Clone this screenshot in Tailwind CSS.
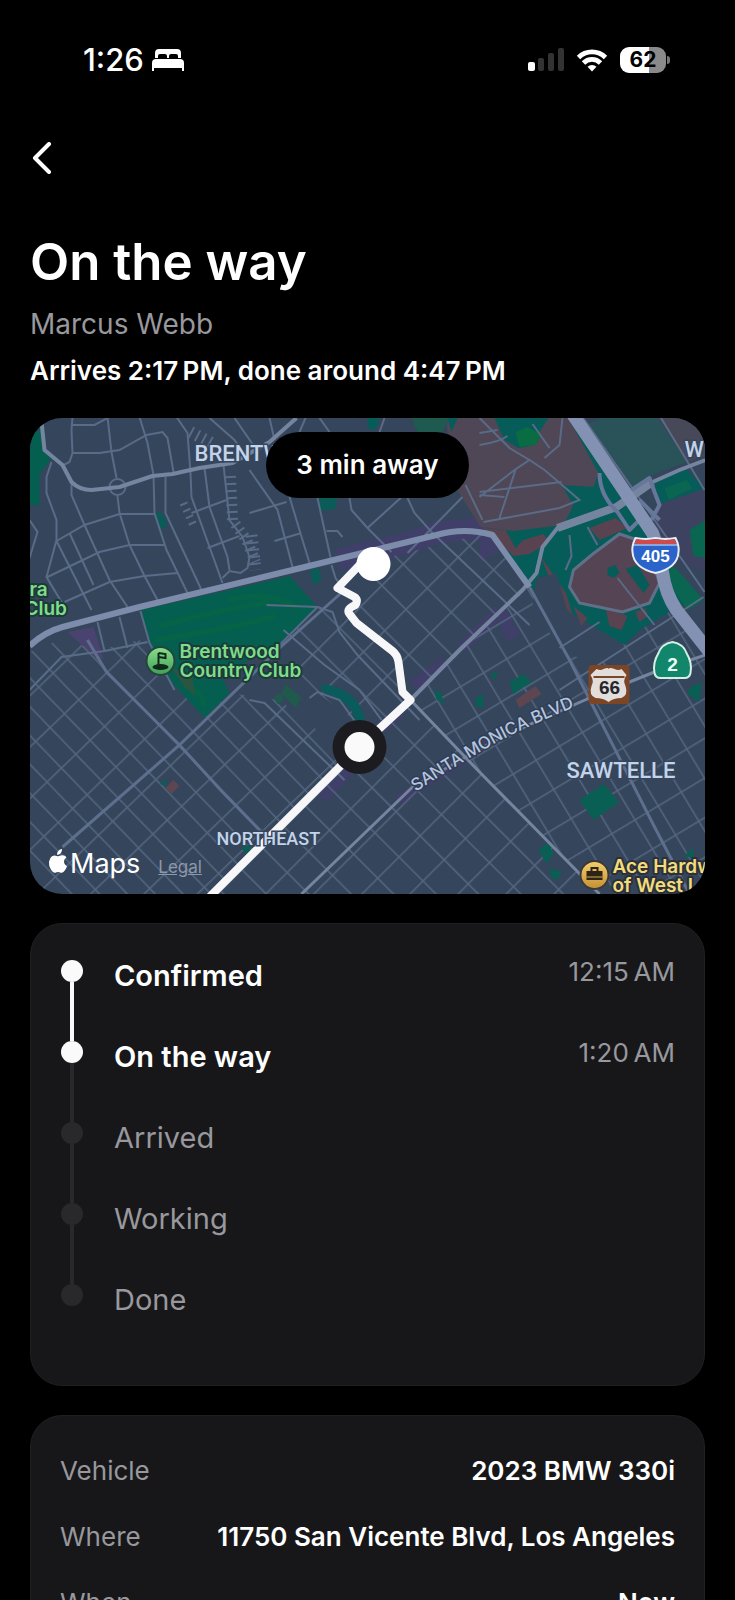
<!DOCTYPE html>
<html lang="en">
<head>
    <meta charset="UTF-8">
    <meta name="viewport" content="width=device-width, initial-scale=1.0">
    <title>On the way</title>
    <script src="https://cdn.jsdelivr.net/npm/@tailwindcss/browser@4"></script>
</head>
<body class="h-screen overflow-hidden bg-black text-white font-['Inter','Liberation_Sans',sans-serif]">

    <!-- status bar -->
    <header class="flex items-center justify-between pt-11 pl-[83px] pr-[65px]">
        <div class="flex items-center gap-2">
            <span class="text-[31px] leading-8 font-medium">1:26</span>
            <svg class="w-8 h-6" viewBox="0 0 32 24" fill="#fff">
                <path d="M3 10V5q0-4 4-4h18q4 0 4 4v5h-3V8q0-2-2-2h-5q-2 0-2 2v2h-2V8q0-2-2-2H8Q6 6 6 8v2z"/>
                <path d="M0 23v-8q0-4 4-4h24q4 0 4 4v8h-2v-3H2v3z"/>
            </svg>
        </div>
        <div class="flex items-center gap-3">
            <svg class="w-9 h-6" viewBox="0 0 36 24">
                <rect x="0" y="14" width="7" height="9" rx="2" fill="#fff"/>
                <rect x="10" y="10" width="6" height="13" rx="2" fill="#333"/>
                <rect x="20" y="5" width="6" height="18" rx="2" fill="#333"/>
                <rect x="30" y="0" width="6" height="23" rx="2" fill="#333"/>
            </svg>
            <svg class="w-8 h-6" viewBox="0 0 32 24" fill="none" stroke="#fff" stroke-width="4.800">
                <path d="M2.500 9.500a19 19 0 0 1 27 0"/>
                <path d="M7.500 15a12 12 0 0 1 17 0"/>
                <path d="M16 23.500l-4.500-4.800a6.500 6.500 0 0 1 9 0z" fill="#fff" stroke="none"/>
            </svg>
            <div class="flex items-center gap-px">
                <div class="w-[46px] h-[26px] rounded-[9px] bg-linear-to-r from-white from-63% to-[#8a8a8a] to-63% text-center text-[21px] leading-[26px] font-bold text-black">62</div>
                <div class="w-[3px] h-2 rounded-r-full bg-[#777]"></div>
            </div>
        </div>
    </header>

    <main class="px-[30px]">
        <button type="button" aria-label="Back" class="block mt-[66px] h-8">
            <svg class="w-6 h-8" viewBox="0 0 24 32" fill="none" stroke="#fff" stroke-width="4" stroke-linecap="round" stroke-linejoin="round">
                <path d="M19 2L5 16l14 14"/>
            </svg>
        </button>

        <h1 class="mt-[60px] text-[51px] leading-[56px] font-semibold">On the way</h1>
        <p class="mt-4 text-[28px] leading-9 text-[#98989d]">Marcus Webb</p>
        <p class="mt-[11px] text-[26px] leading-9 font-semibold">Arrives 2:17&#8239;PM, done around 4:47&#8239;PM</p>

        <!-- map -->
        <section class="relative mt-[29px] h-[476px] rounded-[32px] overflow-hidden bg-[#35465c]">
            <svg class="w-full h-full" viewBox="30 418 676 476" preserveAspectRatio="xMidYMid slice">
                <defs>
                    <pattern id="gridWest" width="20" height="37" patternUnits="userSpaceOnUse" patternTransform="translate(107 672) rotate(-44)">
                        <path d="M0 0V37M0 0H20" stroke="#54667f" stroke-width="3"/>
                    </pattern>
                    <pattern id="gridMid" width="30" height="34" patternUnits="userSpaceOnUse" patternTransform="translate(411 700) rotate(-45)">
                        <path d="M0 0V34M0 0H30" stroke="#54667f" stroke-width="3"/>
                    </pattern>
                    <pattern id="gridEast" width="27" height="34" patternUnits="userSpaceOnUse" patternTransform="translate(570 660) rotate(-31)">
                        <path d="M0 0V34M0 0H27" stroke="#54667f" stroke-width="3"/>
                    </pattern>
                    <path id="smPath" d="M416 792Q470 757 500 741T600 697"/>
                    <linearGradient id="golf" x2="0" y2="1">
                        <stop stop-color="#8be08c"/><stop offset="1" stop-color="#3f9d57"/>
                    </linearGradient>
                    <linearGradient id="shop" x2="0" y2="1">
                        <stop stop-color="#f4d06b"/><stop offset="1" stop-color="#c48f35"/>
                    </linearGradient>
                </defs>

                <!-- commercial strips -->
                <g fill="none" stroke="#403f69">
                    <path d="M338 560L405 544 440 532 490 528" stroke-width="22"/>
                    <path d="M322 798L372 746M382 728L400 712M414 686L446 662M462 648L500 612" stroke-width="12"/>
                    <path d="M398 800L470 756 500 735" stroke-width="10"/>
                </g>
                <path d="M68 632l26-5 10 32-9-2z" fill="#4a4370"/>
                <path d="M480 532l14 5 6 12-20 14zM494 612l10-8 16 30-12 8z" fill="#403f69"/>

                <!-- street grids -->
                <path d="M30 652L60 640 100 650 140 640 172 680 205 718 230 693 280 700 330 740 340 768 213 894H30z" fill="url(#gridWest)"/>
                <path d="M318 607L345 590 378 560 490 532 530 587 411 700 480 772 600 894H213L345 764 355 720 300 680 280 643z" fill="url(#gridMid)"/>
                <path d="M411 700L530 587 560 645 600 650 680 600 706 640V894H600L480 772z" fill="url(#gridEast)"/>

                <!-- parks and campus -->
                <path d="M447 418H572L650 535 690 600 640 630 625 645 575 615 530 587 505 552 483 522 462 485z" fill="#065c59"/>
                <path d="M447 418h48l10 22 14 8 12-2 18-28h20l30 55-5 14-32-2 12 20-10 20-50 6-33-4-20-32-10-20z" fill="#4f4656"/>
                <path d="M516 432l12-5 14 8-6 10-16 2z" fill="#0a6c42"/>
                <path d="M412 418h38l-8 16-24-2z" fill="#1f5a50"/>
                <path d="M368 418h12l-4 12-8-2zM448 418h10l-6 14z" fill="#065c59"/>
                <path d="M484 528l22 2 10 18 8-8 20-6 6 8-20 12-16 2zM541 556l26 38 6 22-16-20zM590 528l26-10 12 10-28 12z" fill="#5a4350"/>
                <path d="M537 578l20-4 12 40 50 30-6 20-50-10-30-50z" fill="#35465c"/>
                <path d="M574 606l14 12-6 8zM606 608l22 8-6 14-12-4zM636 612l10-4 2 8-8 6z" fill="#5a4350"/>
                <path d="M588 424L602 418H658L687 462 655 474 632 488z" fill="#2a5259"/>
                <path d="M659 418H706V456L688 462z" fill="#484958"/>
                <path d="M654 484L686 468 706 490 706 500 690 505 665 512z" fill="#065c59"/>
                <path d="M660 504l46-16v82l-22-6-30-34z" fill="#3d4260"/>
                <path d="M665 488l22-8 6 8-24 12zM690 530l16-10v38l-12-2zM664 560l14 10 26 30-16 10-14-20z" fill="#0a6650"/>
                <path d="M620 534L647 543 660 583 650 603 623 612 580 603 570 587 574 570 592 555z" fill="#544454" stroke="#5f7088" stroke-width="3"/>
                <path d="M626 569l12-4 12 20-6 8zM608 568l8-3 4 8-6 5-6-3z" fill="#065c59"/>

                <!-- golf course -->
                <path d="M142 610L290 576 318 607 280 643 222 676 230 693 205 718 172 682 150 645z" fill="#055f50"/>
                <g fill="none" stroke="#07683f" stroke-width="5" opacity=".6">
                    <path d="M160 626q50-14 110-24M156 640q70-10 120-24M230 600q40-10 68 8M196 690q8 8 8 16"/>
                </g>
                <path d="M172 668l20 6 4 22-10-8z" fill="#2a5540"/>
                <path d="M30 436l12-8 2 22 8 8-12 16 0 32-10-2z" fill="#055f50"/>
                <path d="M156 512l8 2 4 12-8 4zM318 498h20l-2 11-16 2zM310 570l10-2 2 12-8 5z" fill="#0b5b58"/>
                <path d="M322 684q38 4 44 38h-10q-4-22-34-30z" fill="#0a5b5b"/>
                <path d="M274 697l8-4 2 8-6 3zM286 684l16 14-6 10-14-14z" fill="#1f5a4c"/>
                <path d="M435 690l6 2 4 12-8-4zM476 698l8-4v14l-8-2zM490 674l8-2-2 8zM510 682l14-8 8 8-18 12zM690 688l12-6-2 20-12-8zM580 800l24-16 16 18-26 18zM539 850l10-8 5 12-7 10zM550 868l12 4-2 6-8 1zM240 848l12-4-2 10zM160 784l6-4 2 6zM684 856l10-8v10z" fill="#0a5f55"/>
                <path d="M516 700l20-14 6 8-22 14zM166 788l8-8 6 6-8 8z" fill="#5d4650"/>

                <!-- minor streets -->
                <g fill="none" stroke="#596b87" stroke-width="2">
                    <path d="M73 417L72 430 73 453 70 462 62 466M73 425H95L110 417M108 417L112 452 117 478M74 453H100L120 450 147 435 163 432 168 438 174 472"/>
                    <path d="M140 417L148 443 154 475 155 513 167 550 188 593M166 477V513L202 590M177 417L188 433 191 473 192 497 223 583M205 468L210 507 228 557 230 570"/>
                    <path d="M224 465L230 520 243 537 250 557 248 568 241 573 230 571 223 578"/>
                    <circle cx="118" cy="487" r="8"/>
                    <path d="M118 496L120 513 130 545 145 576 158 600M155 514H120L85 525 57 541M72 482V495L85 525 110 580 128 607"/>
                    <path d="M52 462L47 477V493L57 520V540L47 577L65 607M165 545H130L100 552 48 577M178 573L145 576 110 582 65 602M57 541L92 610M70 533L94 585"/>
                    <path d="M192 513L227 500M208 548L240 536M30 520L38 532 30 558"/>
                    <path d="M98 622L105 651 148 642M120 617L128 648M141 611L150 643L175 690M105 651L62 657 30 690"/>
                    <path d="M250 470L278 510 293 567M290 497L310 563M318 498L332 562M250 513L287 502M275 541L302 533M327 531H338L343 537M350 498L352 510 368 528 392 552M463 497L408 553"/>
                    <path d="M408 498L415 513 432 532 530 625M368 528L410 490M466 485L483 520M320 418L330 432M385 418L380 432M300 432L306 418M210 418L235 440 250 462M235 418L255 447M270 418L275 440"/>
                    <path d="M480 418L510 448 530 460M480 445Q500 442 508 436M480 433L498 430M533 424L550 448M516 470L500 518M480 492L562 482M484 522L560 508 580 500 545 470 530 460 515 470 480 497M480 495L505 497M563 418L560 445 545 458"/>
                    <path d="M570 535L572 556 566 570M588 527L598 545M618 578L655 625M661 417L705 490M583 417L660 527 705 592M704 597L560 690M600 622L560 648"/>
                    <path d="M267 605L318 607 333 612 340 632 358 655 420 720M318 607L270 655M332 565L336 578 345 590M250 700L265 703 345 780M310 698L318 692 340 700 356 722"/>
                    <path d="M284 630L325 665 360 690 382 720"/>
                </g>
                <!-- cul-de-sac combs -->
                <g fill="none" stroke="#596b87" stroke-dasharray="2 5">
                    <path d="M231 476L233 520 247 540 256 562" stroke-width="11"/>
                    <path d="M184 503L195 528" stroke-width="8"/>
                    <path d="M191 432L214 444M252 535L256 570" stroke-width="12"/>
                </g>

                <!-- main roads -->
                <path d="M63 847L180 745 280 648 345 590M88 640L107 672 180 745 223 792 262 832M530 587L570 660 653 823 690 894" fill="none" stroke="#5d6f8d" stroke-width="3"/>
                <g fill="none" stroke="#75849f" stroke-linejoin="round">
                    <path d="M42 422L45 450 63 465 72 482Q80 490 92 490L120 487 153 476 173 474 200 468 233 463 270 442 297 418" stroke-width="4"/>
                    <path d="M411 700L480 772 600 894M302 894L412 788 500 738 590 698 655 672 706 655" stroke-width="3"/>
                    <path d="M706 460L680 470 653 482 617 507 587 518 558 528 543 547 537 573 523 590 460 650 411 700" stroke-width="4"/>
                    <path d="M653 482L617 507 558 528" stroke-width="8"/>
                    <path d="M30 646Q45 632 63 627L140 607 260 578 363 553 437 535Q465 527 493 535L505 552 530 587" stroke="#7d8caa" stroke-width="6"/>
                    <path d="M600 473Q600 495 618 512L630 530 640 520M632 490L650 478 655 492 660 505 652 520M640 500L660 520" stroke="#66779a" stroke-width="4"/>
                    <path d="M573 414L653 533Q660 550 663 572T677 610L710 652" stroke="#8391b3" stroke-width="13"/>
                </g>

                <!-- route -->
                <path d="M374 558L360 565 338 588 355 597Q359 600 356 605 346 609 350 614L357 623 393 651Q398 655 399 662L403 692 411 700 360 747 209 898" fill="none" stroke="#f7f7fa" stroke-width="8" stroke-linejoin="round"/>
                <circle cx="374" cy="564" r="17" fill="#fff"/>
                <circle cx="360" cy="747" r="27" fill="#1c1b20"/>
                <circle cx="360" cy="747" r="15" fill="#fafafa"/>

                <!-- area names -->
                <g fill="#c3d3ea" stroke="#35465c" stroke-width="3" paint-order="stroke" class="font-['Roboto',sans-serif] font-medium">
                    <text x="195" y="461" font-size="22">BRENTWOOD</text>
                    <text x="685" y="457" font-size="22">WESTWOOD</text>
                    <text x="567" y="778" font-size="22">SAWTELLE</text>
                    <text x="217" y="845" font-size="18">NORTHEAST</text>
                </g>
                <text font-size="17" font-weight="500" fill="#b4c3de" stroke="#2f3d54" stroke-width="3" paint-order="stroke"><textPath href="#smPath">SANTA MONICA BLVD</textPath></text>

                <!-- places -->
                <g font-size="19" font-weight="600" fill="#7fdc8b" stroke="#1d3a38" stroke-width="4" paint-order="stroke" stroke-linejoin="round">
                    <text x="180" y="658">Brentwood</text>
                    <text x="180" y="677">Country Club</text>
                    <text x="30" y="596">ra</text>
                    <text x="25" y="615">Club</text>
                </g>
                <circle cx="161" cy="661" r="14" fill="url(#golf)" stroke="#24443c" stroke-width="2"/>
                <path d="M159 653v13M159 653l7 1v4l-7-1" fill="none" stroke="#10291d" stroke-width="2"/>
                <ellipse cx="161" cy="667" rx="8" ry="3" fill="#10291d"/>
                <g font-size="19" font-weight="600" fill="#f3dc7c" stroke="#2c3038" stroke-width="4" paint-order="stroke" stroke-linejoin="round">
                    <text x="613" y="873">Ace Hardware</text>
                    <text x="613" y="892">of West LA</text>
                </g>
                <circle cx="595" cy="875" r="14" fill="url(#shop)" stroke="#3a3838" stroke-width="2"/>
                <path d="M587 871h16v9h-16z" fill="#2b2417"/>
                <path d="M592 871v-3h6v3" fill="none" stroke="#2b2417" stroke-width="2"/>
                <path d="M587 877h16" stroke="#d9a848" stroke-width="1"/>

                <!-- road shields -->
                <g text-anchor="middle" font-weight="700">
                    <path d="M636 538q10 2 20 0 10 2 20 0 4 8 3 14-1 16-23 21-22-5-23-21-1-6 3-14z" fill="#2a63c9" stroke="#e8ecf4" stroke-width="2"/>
                    <path d="M637 539q9 2 19 0 10 2 19 0l2 5h-42z" fill="#cf4a4a"/>
                    <path d="M634 545h44" stroke="#e8ecf4" stroke-width="1"/>
                    <text x="656" y="562" font-size="17" fill="#fff" class="font-['Liberation_Sans',sans-serif]">405</text>
                    <path d="M673 642q11 2 14 11 6 10 4 20-1 5-6 5h-24q-5 0-6-5-2-10 4-20 3-9 14-11z" fill="#12866a" stroke="#d4efe4" stroke-width="2"/>
                    <text x="673" y="671" font-size="19" fill="#e9fff5" class="font-['Liberation_Sans',sans-serif]">2</text>
                    <rect x="589" y="665" width="41" height="39" rx="4" fill="#7c4526"/>
                    <path d="M597 669q4 2 7 0 5-2 5 0 1-2 6 0 4 2 7 0l5 6q-4 6-1 11 3 9-4 12-8 0-13 4-5-4-13-4-7-3-4-12 3-5-1-11z" fill="#e2dedc"/>
                    <path d="M594 677h31" stroke="#7c4526" stroke-width="2"/>
                    <text x="610" y="694" font-size="19" fill="#26262a" class="font-['Liberation_Sans',sans-serif]">66</text>
                </g>
            </svg>

            <div class="absolute top-[14px] inset-x-0 flex justify-center">
                <p class="rounded-full bg-black px-[30px] py-[15px] text-[26px] leading-9 font-semibold">3 min away</p>
            </div>
            <div class="absolute left-[18px] bottom-3 flex items-baseline gap-[18px]">
                <p class="flex items-baseline gap-[2px] text-[27px] leading-9">
                    <svg class="w-5 h-6" viewBox="0 0 20 24" fill="#fff">
                        <path d="M14 0q.3 2.600-1.400 4.300Q11 6 9 5.800q-.2-2.200 1.300-3.900Q11.800.2 14 0z"/>
                        <path d="M18.500 8.200q-2.600 1.600-2.500 4.400.1 3.300 3 4.600-.7 2.200-2 4.100-1.600 2.400-3.200 2.400-.9 0-2-.5-1.500-.6-3.200 0-1.100.5-2 .5-1.600 0-3.600-3Q.5 17 1 12.800 1.400 9 4 7.300q2.300-1.400 4.600-.4 1.400.6 2.400.2 2-.9 3.700-.8 2.400.1 3.800 1.900z"/>
                    </svg>Maps</p>
                <a href="#" class="text-[17px] text-[#8d98aa] underline">Legal</a>
            </div>
        </section>

        <!-- progress -->
        <ol class="mt-[29px] rounded-[32px] border border-[#202022] bg-[#171719] pt-9 pb-5 px-[29px]">
            <li class="flex items-start h-[81px]">
                <div class="flex flex-col items-center h-full ml-px">
                    <span class="w-[22px] h-[22px] rounded-full bg-[#fafafa]"></span>
                    <span class="w-1 flex-1 bg-[#fafafa]"></span>
                </div>
                <span class="flex-1 ml-[31px] text-[29px] leading-8 font-semibold">Confirmed</span>
                <time class="text-[26px] leading-6 text-[#98989d]">12:15&#8239;AM</time>
            </li>
            <li class="flex items-start h-[81px]">
                <div class="flex flex-col items-center h-full ml-px">
                    <span class="w-[22px] h-[22px] rounded-full bg-[#fafafa]"></span>
                    <span class="w-1 flex-1 bg-[#29292c]"></span>
                </div>
                <span class="flex-1 ml-[31px] text-[29px] leading-8 font-semibold">On the way</span>
                <time class="text-[26px] leading-6 text-[#98989d]">1:20&#8239;AM</time>
            </li>
            <li class="flex items-start h-[81px]">
                <div class="flex flex-col items-center h-full ml-px">
                    <span class="w-[22px] h-[22px] rounded-full bg-[#29292c]"></span>
                    <span class="w-1 flex-1 bg-[#29292c]"></span>
                </div>
                <span class="flex-1 ml-[31px] text-[29px] leading-8 text-[#98989d]">Arrived</span>
            </li>
            <li class="flex items-start h-[81px]">
                <div class="flex flex-col items-center h-full ml-px">
                    <span class="w-[22px] h-[22px] rounded-full bg-[#29292c]"></span>
                    <span class="w-1 flex-1 bg-[#29292c]"></span>
                </div>
                <span class="flex-1 ml-[31px] text-[29px] leading-8 text-[#98989d]">Working</span>
            </li>
            <li class="flex items-start h-[81px]">
                <span class="w-[22px] h-[22px] ml-px rounded-full bg-[#29292c]"></span>
                <span class="flex-1 ml-[31px] text-[29px] leading-8 text-[#98989d]">Done</span>
            </li>
        </ol>

        <!-- booking details -->
        <dl class="mt-[29px] rounded-[32px] border border-[#202022] bg-[#171719] px-[29px] py-[37px] flex flex-col gap-[30px] text-[26px] leading-9">
            <div class="flex justify-between">
                <dt class="text-[#98989d]">Vehicle</dt>
                <dd class="font-semibold">2023 BMW 330i</dd>
            </div>
            <div class="flex justify-between">
                <dt class="text-[#98989d]">Where</dt>
                <dd class="font-semibold">11750 San Vicente Blvd, Los Angeles</dd>
            </div>
            <div class="flex justify-between">
                <dt class="text-[#98989d]">When</dt>
                <dd class="font-semibold">Now</dd>
            </div>
        </dl>
    </main>
</body>
</html>
